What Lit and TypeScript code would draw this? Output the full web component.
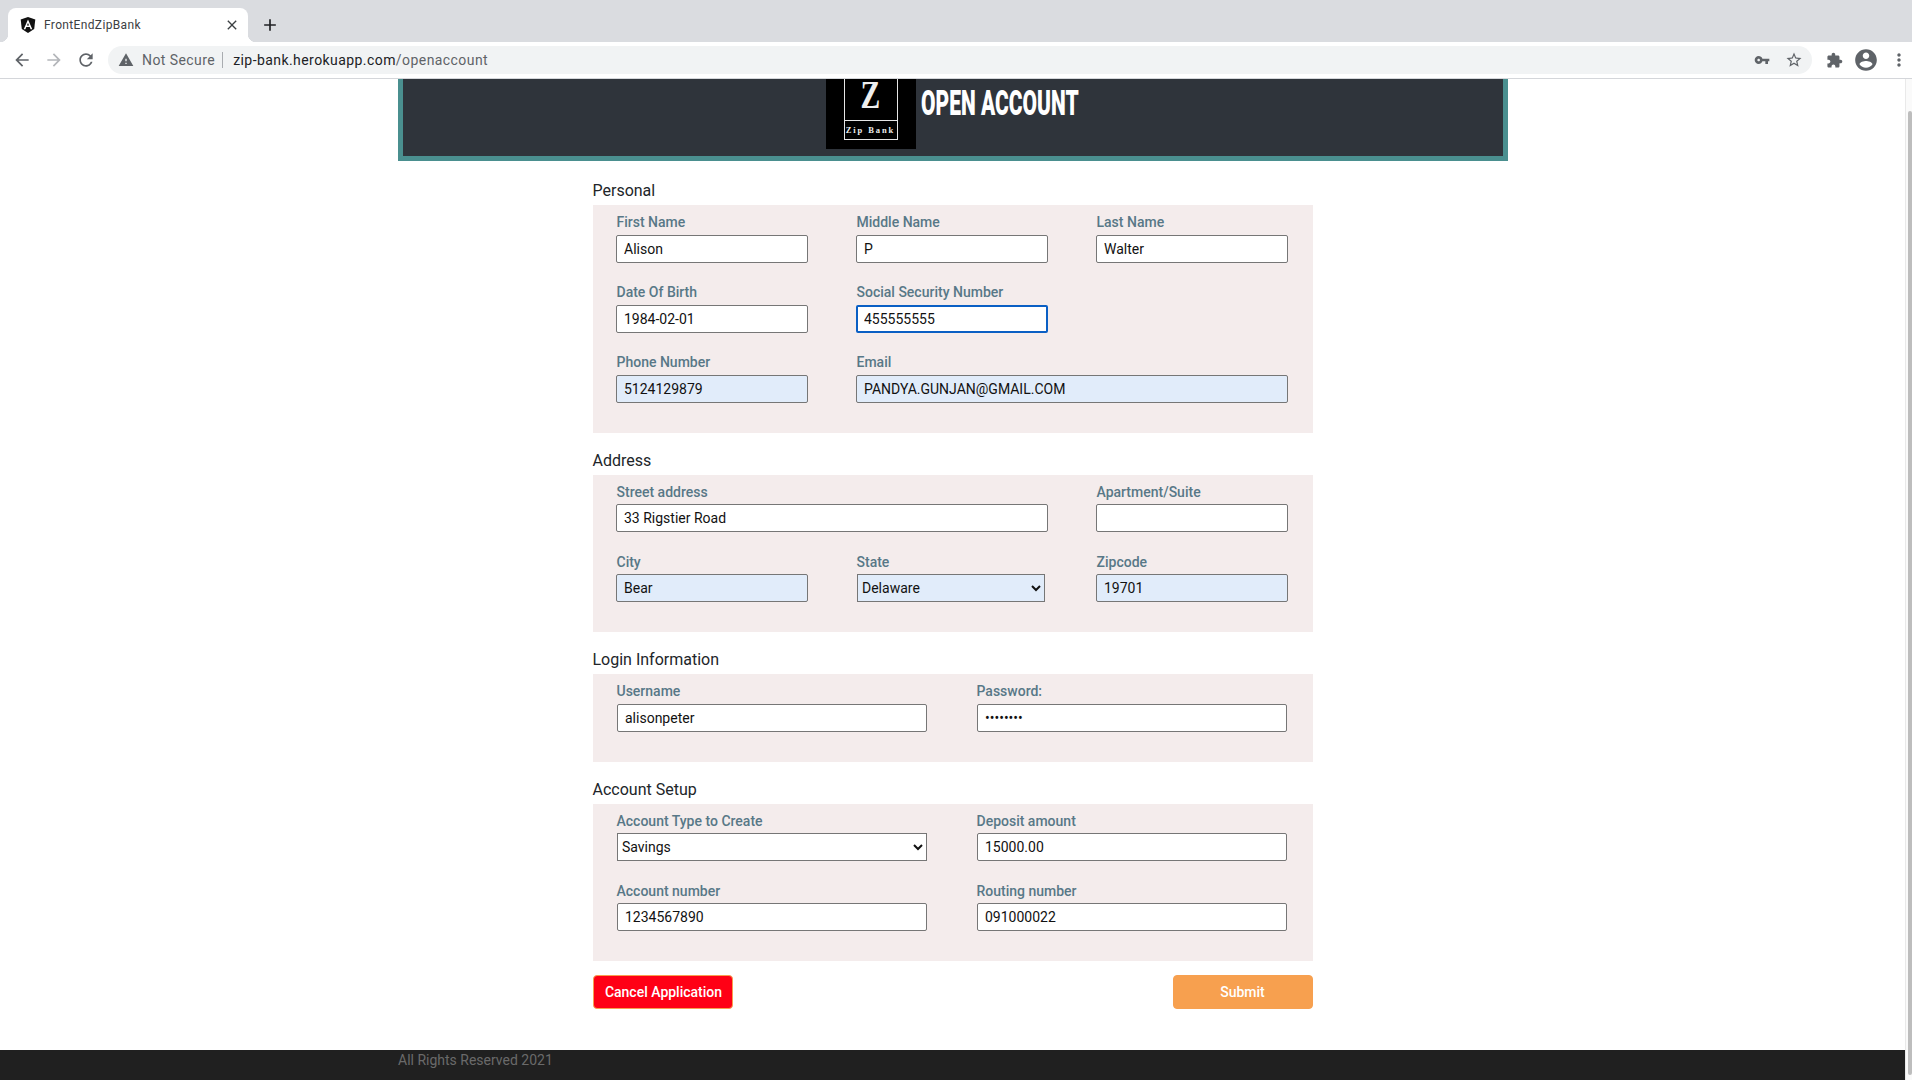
import { LitElement, html, css, svg } from "lit";
import { customElement } from "lit/decorators.js";

const P = {
  back: "M20 11H7.83l5.59-5.59L12 4l-8 8 8 8 1.41-1.41L7.83 13H20v-2z",
  forward: "M4 11h12.17l-5.59-5.59L12 4l8 8-8 8-1.41-1.41L16.17 13H4v-2z",
  reload: "M17.65 6.35C16.2 4.9 14.21 4 12 4c-4.42 0-7.99 3.58-7.99 8s3.57 8 7.99 8c3.73 0 6.84-2.55 7.73-6h-2.08c-.82 2.33-3.04 4-5.65 4-3.31 0-6-2.69-6-6s2.69-6 6-6c1.66 0 3.14.69 4.22 1.78L13 11h7V4l-2.35 2.35z",
  warn: "M1 21h22L12 2 1 21zm12-3h-2v-2h2v2zm0-4h-2v-4h2v4z",
  key: "M12.65 10C11.83 7.67 9.61 6 7 6c-3.31 0-6 2.69-6 6s2.69 6 6 6c2.61 0 4.83-1.67 5.65-4H17v4h4v-4h2v-4H12.65zM7 14c-1.1 0-2-.9-2-2s.9-2 2-2 2 .9 2 2-.9 2-2 2z",
  star: "M22 9.24l-7.19-.62L12 2 9.19 8.63 2 9.24l5.46 4.73L5.82 21 12 17.27 18.18 21l-1.63-7.03L22 9.24zM12 15.4l-3.76 2.27 1-4.28-3.32-2.88 4.38-.38L12 6.1l1.71 4.04 4.38.38-3.32 2.88 1 4.28L12 15.4z",
  ext: "M20.5 11H19V7c0-1.1-.9-2-2-2h-4V3.5C13 2.12 11.88 1 10.5 1S8 2.12 8 3.5V5H4c-1.1 0-1.99.9-1.99 2v3.8H3.5c1.49 0 2.7 1.21 2.7 2.7s-1.21 2.7-2.7 2.7H2V20c0 1.1.9 2 2 2h3.8v-1.5c0-1.49 1.21-2.7 2.7-2.7 1.49 0 2.7 1.21 2.7 2.7V22H17c1.1 0 2-.9 2-2v-4h1.5c1.38 0 2.5-1.12 2.5-2.5S21.88 11 20.5 11z",
  avatar: "M12 2C6.48 2 2 6.48 2 12s4.48 10 10 10 10-4.48 10-10S17.52 2 12 2zm0 3c1.66 0 3 1.34 3 3s-1.34 3-3 3-3-1.34-3-3 1.34-3 3-3zm0 14.2c-2.5 0-4.71-1.28-6-3.22.03-1.99 4-3.08 6-3.08 1.99 0 5.97 1.09 6 3.08-1.29 1.94-3.5 3.22-6 3.22z",
  dots: "M12 8c1.1 0 2-.9 2-2s-.9-2-2-2-2 .9-2 2 .9 2 2 2zm0 2c-1.1 0-2 .9-2 2s.9 2 2 2 2-.9 2-2-.9-2-2-2zm0 6c-1.1 0-2 .9-2 2s.9 2 2 2 2-.9 2-2-.9-2-2-2z",
  close: "M19 6.41 17.59 5 12 10.59 6.41 5 5 6.41 10.59 12 5 17.59 6.41 19 12 13.41 17.59 19 19 17.59 13.41 12z",
  plus: "M19 13h-6v6h-2v-6H5v-2h6V5h2v6h6v2z",
};

const icon = (d: string, size: number, fill: string) =>
  html`<svg width=${size} height=${size} viewBox="0 0 24 24" fill=${fill}>${svg`<path d=${d}></path>`}</svg>`;

type Field = { label: string; value?: string; cls?: string; kind?: string; options?: string[] };

@customElement("app-root")
export class AppRoot extends LitElement {
  static styles = css`
    :host {
      display: flex;
      flex-direction: column;
      width: 1912px;
      height: 1080px;
      overflow: hidden;
      background: #fff;
      font-family: Roboto, "Liberation Sans", sans-serif;
    }
    .strip {
      height: 34px;
      padding: 8px 0 0 8px;
      background: #dadce0;
      display: flex;
      align-items: flex-start;
      flex: none;
    }
    .tab {
      position: relative;
      width: 240px;
      height: 34px;
      box-sizing: border-box;
      background: #fff;
      border-radius: 8px 8px 0 0;
      display: flex;
      align-items: center;
      padding-left: 12px;
      font-size: 12px;
      color: #3c4043;
    }
    .tab::before,
    .tab::after {
      content: "";
      position: absolute;
      bottom: 0;
      width: 8px;
      height: 8px;
      background: radial-gradient(circle at 0 0, transparent 8px, #fff 8.5px);
    }
    .tab::before {
      left: -8px;
    }
    .tab::after {
      right: -8px;
      background: radial-gradient(circle at 100% 0, transparent 8px, #fff 8.5px);
    }
    .favicon {
      margin-right: 8px;
      flex: none;
    }
    .tab-title {
      flex: 1;
      letter-spacing: 0.35px;
    }
    .tab-close {
      display: flex;
      margin-right: 8px;
    }
    .new-tab {
      display: flex;
      margin: 7px 0 0 12px;
    }
    .toolbar {
      flex: none;
      height: 36px;
      background: #fff;
      border-bottom: 1px solid #d4d6da;
      display: flex;
      align-items: center;
      padding-left: 6px;
      overflow: hidden;
    }
    .tb {
      width: 32px;
      height: 32px;
      flex: none;
      display: flex;
      align-items: center;
      justify-content: center;
    }
    .tb.last {
      width: 30px;
      padding-left: 3px;
      box-sizing: border-box;
    }
    .omni {
      flex: 1;
      height: 28px;
      margin: 0 6px;
      border-radius: 14px;
      background: #f1f3f4;
      display: flex;
      align-items: center;
      padding: 0 2px 0 10px;
      font-size: 14px;
      letter-spacing: 0.43px;
      color: #5f6368;
    }
    .omni .warn {
      display: flex;
      margin-right: 8px;
    }
    .sep {
      width: 1px;
      height: 16px;
      background: #a9acb0;
      margin: 0 10px 0 7px;
    }
    .host {
      color: #202124;
    }
    .url {
      flex: 1;
    }
    .viewport {
      flex: 1;
      min-height: 0;
      display: flex;
    }
    .page {
      flex: 1;
      display: flex;
      flex-direction: column;
      align-items: center;
      min-width: 0;
    }
    .scroll {
      flex: none;
      width: 7px;
      box-sizing: border-box;
      border-left: 1px solid #e9e9e9;
      background: #fafafa;
      padding: 32px 0 5px 2px;
    }
    .thumb {
      height: 100%;
      background: #bdbdbd;
      border-radius: 2px;
    }
    .banner {
      width: 1110px;
      height: 82px;
      box-sizing: border-box;
      flex: none;
      background: #2f343b;
      border: 5px solid #4a8f8f;
      border-top: 0;
      display: flex;
      justify-content: center;
      align-items: flex-start;
    }
    .logo {
      width: 90px;
      height: 70px;
      background: #000;
      flex: none;
      display: flex;
      justify-content: center;
    }
    .logo-box {
      width: 54px;
      height: 61px;
      box-sizing: border-box;
      border: 1px solid #e6e6e6;
      border-top: 0;
      display: flex;
      flex-direction: column;
      align-items: center;
      font-family: "Liberation Serif", serif;
      color: #eee;
    }
    .logo-z {
      height: 41px;
      width: 100%;
      text-align: center;
      line-height: 32px;
      border-bottom: 1px solid #e6e6e6;
    }
    .logo-z span {
      display: inline-block;
      font-size: 40px;
      font-weight: 700;
      transform: scaleX(0.74);
    }
    .logo-name {
      font-size: 8.5px;
      font-weight: 700;
      letter-spacing: 1.9px;
      line-height: 18px;
      white-space: nowrap;
    }
    .title {
      width: 157px;
      margin: 4px 2px 0 5px;
      color: #fff;
      white-space: nowrap;
      font-size: 35px;
      font-weight: 900;
      line-height: 42px;
      transform: scaleX(0.6);
      transform-origin: left center;
    }
    .form {
      width: 720px;
      padding-top: 18px;
      flex: none;
    }
    .heading {
      font-size: 16px;
      line-height: 24px;
      color: #212529;
      margin: 16px 0 2px;
    }
    .heading.first {
      margin-top: 0;
    }
    .panel {
      background: #f4ecec;
      padding: 5px 0 13px;
    }
    .panel.tight {
      padding-top: 4px;
    }
    .grid {
      display: grid;
    }
    .grid.three {
      grid-template-columns: repeat(3, 240px);
    }
    .grid.two {
      grid-template-columns: repeat(2, 360px);
    }
    .field {
      padding: 0 24px;
      height: 70px;
      box-sizing: border-box;
    }
    .span2 {
      grid-column: span 2;
    }
    .grid.two .field {
      padding: 0 25px 0 24px;
    }
    .field label {
      display: block;
      height: 24px;
      margin-bottom: 1px;
      line-height: 24px;
      font-size: 14px;
      font-weight: 500;
      color: #587887;
    }
    .tight .field label {
      padding-top: 1px;
      margin-bottom: 0;
    }
    .ctl {
      display: block;
      width: 100%;
      height: 28px;
      box-sizing: border-box;
      margin: 0 0 0 -0.5px;
      padding: 0 7px;
      border: 1px solid #767676;
      border-radius: 2px;
      background: #fff;
      color: #111;
      font: 400 14px Roboto, sans-serif;
      outline: none;
    }
    .auto {
      background: #e1ecfa;
    }
    .focus {
      border: 2px solid #0a5fc4;
      padding: 0 6px;
    }
    select.ctl {
      padding: 0;
      border-radius: 0;
    }
    .sel-state {
      width: 188px;
      margin-left: 0.5px;
    }
    .grid.two .ctl {
      width: 310px;
      margin-left: 0.5px;
    }
    .actions {
      margin-top: 14px;
      display: flex;
      justify-content: space-between;
    }
    button {
      width: 140px;
      height: 34px;
      border: 1px solid #f7a04f;
      border-radius: 4px;
      color: #fff;
      font: 500 14px Roboto, sans-serif;
      padding: 0;
    }
    .cancel {
      background: #ff0015;
      padding-left: 2px;
    }
    .submit {
      background: #f7a04f;
    }
    .footer {
      margin-top: auto;
      flex: none;
      align-self: stretch;
      height: 30px;
      background: #202020;
      color: #6a6a6a;
      font-size: 14px;
      line-height: 21px;
      padding-left: 398px;
    }
  `;

  private control(f: Field) {
    if (f.kind === "select") {
      return html`<select class="ctl ${f.cls ?? ""}">
        ${(f.options ?? []).map((o) => html`<option>${o}</option>`)}
      </select>`;
    }
    return html`<input
      class="ctl ${f.cls ?? ""}"
      type=${f.kind ?? "text"}
      .value=${f.value ?? ""}
    />`;
  }

  private section(title: string, cols: string, tight: boolean, first: boolean, fields: (Field & { span?: boolean; empty?: boolean })[]) {
    return html`
      <div class="heading ${first ? "first" : ""}">${title}</div>
      <div class="panel ${tight ? "tight" : ""}">
        <div class="grid ${cols}">
          ${fields.map((f) =>
            f.empty
              ? html`<div class="field"></div>`
              : html`<div class="field ${f.span ? "span2" : ""}">
                  <label>${f.label}</label>
                  ${this.control(f)}
                </div>`
          )}
        </div>
      </div>
    `;
  }

  render() {
    return html`
      <div class="strip">
        <div class="tab">
          <svg class="favicon" width="16" height="16" viewBox="0 0 16 16">
            <path d="M8 0 15.3 2.6 14.2 12.1 8 16 1.8 12.1.7 2.6Z" fill="#111"></path>
            <path d="M8 2.6 3.7 12.2h1.7l.9-2.2h3.4l.9 2.2h1.7ZM6.9 8.6 8 5.9l1.1 2.7Z" fill="#fff"></path>
          </svg>
          <span class="tab-title">FrontEndZipBank</span>
          <span class="tab-close">${icon(P.close, 16, "#3c4043")}</span>
        </div>
        <span class="new-tab">${icon(P.plus, 20, "#202124")}</span>
      </div>
      <div class="toolbar">
        <span class="tb">${icon(P.back, 20, "#5f6368")}</span>
        <span class="tb">${icon(P.forward, 20, "#b4b6ba")}</span>
        <span class="tb">${icon(P.reload, 20, "#5f6368")}</span>
        <div class="omni">
          <span class="warn">${icon(P.warn, 16, "#5f6368")}</span>
          <span>Not Secure</span>
          <span class="sep"></span>
          <span class="url"><span class="host">zip-bank.herokuapp.com</span>/openaccount</span>
          <span class="tb">${icon(P.key, 16, "#5f6368")}</span>
          <span class="tb">${icon(P.star, 18, "#5f6368")}</span>
        </div>
        <span class="tb">${icon(P.ext, 17, "#5f6368")}</span>
        <span class="tb">${icon(P.avatar, 26, "#5f6368")}</span>
        <span class="tb last">${icon(P.dots, 20, "#5f6368")}</span>
      </div>
      <div class="viewport">
        <div class="page">
          <div class="banner">
            <div class="logo">
              <div class="logo-box">
                <div class="logo-z"><span>Z</span></div>
                <div class="logo-name">Zip Bank</div>
              </div>
            </div>
            <div class="title">OPEN ACCOUNT</div>
          </div>
          <div class="form">
            ${this.section("Personal", "three", false, true, [
              { label: "First Name", value: "Alison" },
              { label: "Middle Name", value: "P" },
              { label: "Last Name", value: "Walter" },
              { label: "Date Of Birth", value: "1984-02-01" },
              { label: "Social Security Number", value: "455555555", cls: "focus" },
              { label: "", empty: true },
              { label: "Phone Number", value: "5124129879", cls: "auto" },
              { label: "Email", value: "PANDYA.GUNJAN@GMAIL.COM", cls: "auto", span: true },
            ])}
            ${this.section("Address", "three", true, false, [
              { label: "Street address", value: "33 Rigstier Road", span: true },
              { label: "Apartment/Suite", value: "" },
              { label: "City", value: "Bear", cls: "auto" },
              { label: "State", kind: "select", options: ["Delaware"], cls: "auto sel-state" },
              { label: "Zipcode", value: "19701", cls: "auto" },
            ])}
            ${this.section("Login Information", "two", false, false, [
              { label: "Username", value: "alisonpeter" },
              { label: "Password:", value: "password", kind: "password" },
            ])}
            ${this.section("Account Setup", "two", true, false, [
              { label: "Account Type to Create", kind: "select", options: ["Savings"] },
              { label: "Deposit amount", value: "15000.00" },
              { label: "Account number", value: "1234567890" },
              { label: "Routing number", value: "091000022" },
            ])}
            <div class="actions">
              <button class="cancel">Cancel Application</button>
              <button class="submit">Submit</button>
            </div>
          </div>
          <div class="footer">All Rights Reserved 2021</div>
        </div>
        <div class="scroll"><div class="thumb"></div></div>
      </div>
    `;
  }
}
